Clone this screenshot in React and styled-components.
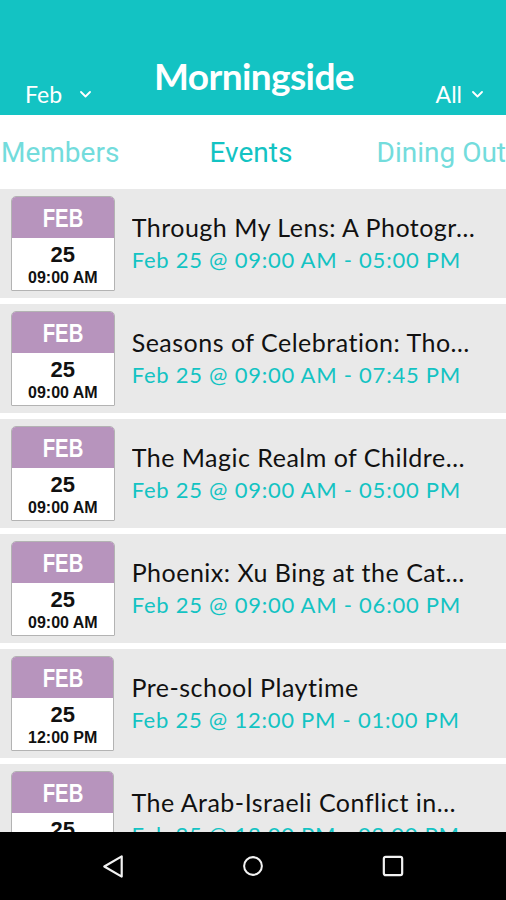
import React from 'react';
import styled, { createGlobalStyle } from 'styled-components';

const GlobalStyle = createGlobalStyle`
  html, body {
    margin: 0;
    padding: 0;
    background: #ffffff;
  }
  body {
    width: 506px;
    height: 900px;
    overflow: hidden;
  }
`

const Screen = styled.div`
  width: 506px;
  height: 900px;
  display: flex;
  flex-direction: column;
  font-family: Lato, "Open Sans", sans-serif;
`

const Header = styled.header`
  height: 115px;
  flex: none;
  background-color: #13c3c3;
  display: grid;
  grid-template-columns: 1fr auto 1fr;
  align-items: end;
  padding: 0 23px 7px 25px;
  box-sizing: border-box;
  color: #ffffff;
`

const Picker = styled.div`
  display: flex;
  align-items: center;
  gap: ${p => p.$gap}px;
  justify-self: ${p => p.$align};
  font-size: 23px;
  line-height: 28px;
`

const Title = styled.h1`
  margin: 0 0 12px;
  font-family: Lato, sans-serif;
  font-weight: 700;
  font-size: 37px;
  line-height: 40px;
  letter-spacing: -0.6px;
`

const Tabs = styled.nav`
  height: 74px;
  flex: none;
  display: flex;
  justify-content: space-between;
  align-items: center;
  padding: 0 0 0 1px;
  font-family: Roboto, sans-serif;
  font-size: 28px;
  white-space: nowrap;
  overflow: hidden;
`

const Tab = styled.span`
  color: ${p => (p.$active ? '#13c3c3' : '#73dcdc')};
  margin-left: ${p => (p.$active ? '6px' : '0')};
`

const List = styled.main`
  flex: 1;
  overflow: hidden;
  display: flex;
  flex-direction: column;
  gap: 6px;
`

const Row = styled.section`
  height: 109px;
  flex: none;
  background-color: #e9e9e9;
  display: flex;
  align-items: center;
  gap: 17px;
  padding-left: 11px;
`

const CalBox = styled.div`
  flex: none;
  height: 95px;
  box-sizing: border-box;
  display: flex;
  flex-direction: column;
  border: 1px solid #b3b3b3;
  border-radius: 5px 5px 1px 1px;
  overflow: hidden;
  background: #ffffff;
  font-family: "Liberation Sans", Arial, sans-serif;
  font-weight: 700;
  color: #111111;
`

const CalMonth = styled.div`
  height: 39px;
  background-color: #b794bd;
  color: #ffffff;
  display: flex;
  align-items: center;
  justify-content: center;
  font-size: 26px;
  padding-top: 2px;

  span {
    display: inline-block;
    transform: scaleX(0.78);
  }
`

const CalBody = styled.div`
  flex: 1;
  display: flex;
  flex-direction: column;
  align-items: center;
  padding: 4px 16px 0;
`

const CalDay = styled.div`
  font-size: 22px;
  line-height: 26px;
`

const CalTime = styled.div`
  font-size: 16px;
  line-height: 20px;
`

const Info = styled.div`
  min-width: 0;
  display: flex;
  flex-direction: column;
  white-space: nowrap;
  overflow: hidden;
  padding-right: 6px;
`

const EventTitle = styled.div`
  font-size: 25px;
  line-height: 30px;
  letter-spacing: 0.5px;
  color: #111111;
  overflow: hidden;
  text-overflow: ellipsis;
`

const EventTime = styled.div`
  font-size: 22px;
  line-height: 30px;
  margin-top: 3px;
  letter-spacing: 0.75px;
  color: #13c3c3;
`

const NavBar = styled.footer`
  height: 68px;
  flex: none;
  background: #000000;
  display: flex;
  justify-content: center;
  align-items: center;
  gap: 118px;
`

const NavButton = styled.div`
  width: 22px;
  height: 26px;
  display: flex;
  align-items: center;
  justify-content: center;
`

function Chevron() {
  return (
    <svg width="11" height="7" viewBox="0 0 11 7">
      <path d="M1 1l4.5 4.5L10 1" fill="none" stroke="#fff" strokeWidth="1.8" strokeLinecap="round" strokeLinejoin="round" />
    </svg>
  )
}

const events = [
  { title: 'Through My Lens: A Photogr…', time: '09:00 AM', end: '05:00 PM' },
  { title: 'Seasons of Celebration: Tho…', time: '09:00 AM', end: '07:45 PM' },
  { title: 'The Magic Realm of Childre…', time: '09:00 AM', end: '05:00 PM' },
  { title: 'Phoenix: Xu Bing at the Cat…', time: '09:00 AM', end: '06:00 PM' },
  { title: 'Pre-school Playtime', time: '12:00 PM', end: '01:00 PM' },
  { title: 'The Arab-Israeli Conflict in…', time: '12:00 PM', end: '02:00 PM' },
]

function App() {
  return (
    <Screen>
      <GlobalStyle />
      <Header>
        <Picker $align="start" $gap={18}>
          Feb <Chevron />
        </Picker>
        <Title>Morningside</Title>
        <Picker $align="end" $gap={10}>
          All <Chevron />
        </Picker>
      </Header>

      <Tabs>
        <Tab>Members</Tab>
        <Tab $active>Events</Tab>
        <Tab>Dining Out</Tab>
      </Tabs>

      <List>
        {events.map((ev, i) => (
          <Row key={i}>
            <CalBox>
              <CalMonth><span>FEB</span></CalMonth>
              <CalBody>
                <CalDay>25</CalDay>
                <CalTime>{ev.time}</CalTime>
              </CalBody>
            </CalBox>
            <Info>
              <EventTitle>{ev.title}</EventTitle>
              <EventTime>Feb 25 @ {ev.time} - {ev.end}</EventTime>
            </Info>
          </Row>
        ))}
      </List>

      <NavBar>
        <NavButton>
          <svg width="24" height="27" viewBox="0 0 24 27">
            <path d="M21.5 2.5v22L2.5 13.5z" fill="none" stroke="#f2f2f2" strokeWidth="2.4" strokeLinejoin="round" />
          </svg>
        </NavButton>
        <NavButton>
          <svg width="26" height="26" viewBox="0 0 26 26">
            <circle cx="13" cy="13" r="10.5" fill="none" stroke="#f2f2f2" strokeWidth="2.4" />
          </svg>
        </NavButton>
        <NavButton>
          <svg width="24" height="24" viewBox="0 0 24 24">
            <rect x="2" y="2" width="20" height="20" rx="2" fill="none" stroke="#f2f2f2" strokeWidth="2.4" />
          </svg>
        </NavButton>
      </NavBar>
    </Screen>
  )
}

export default App
